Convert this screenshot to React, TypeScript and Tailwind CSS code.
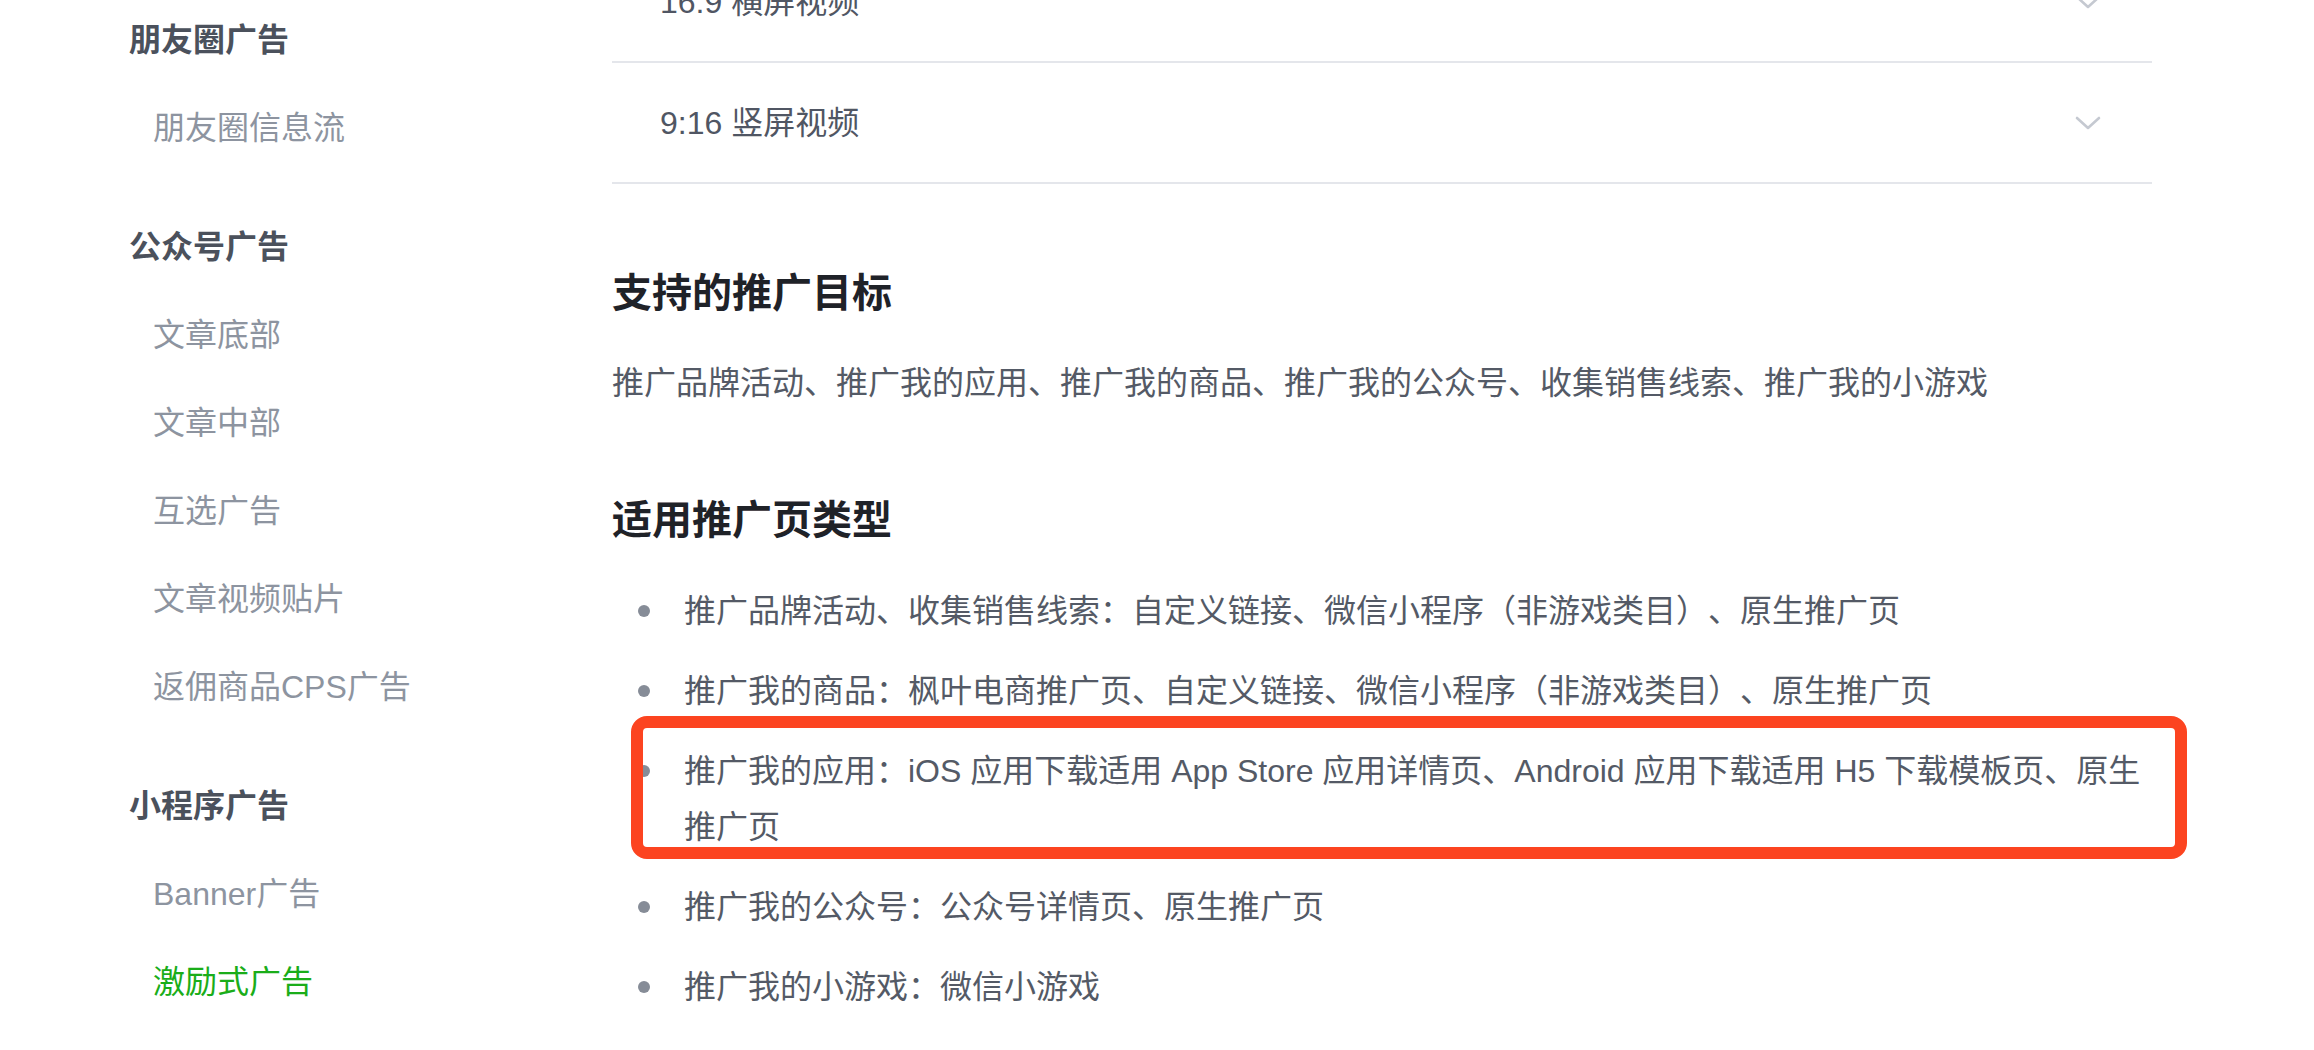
import React from 'react';

type NavGroup = { title: string; items: string[]; active?: string };

const NAV: NavGroup[] = [
  { title: '朋友圈广告', items: ['朋友圈信息流'] },
  { title: '公众号广告', items: ['文章底部', '文章中部', '互选广告', '文章视频贴片', '返佣商品CPS广告'] },
  { title: '小程序广告', items: ['Banner广告', '激励式广告'], active: '激励式广告' },
];

const FORMATS = ['16:9 横屏视频', '9:16 竖屏视频'];

const PAGE_TYPES = [
  '推广品牌活动、收集销售线索：自定义链接、微信小程序（非游戏类目）、原生推广页',
  '推广我的商品：枫叶电商推广页、自定义链接、微信小程序（非游戏类目）、原生推广页',
  null, // app row, rendered with the highlight box
  '推广我的公众号：公众号详情页、原生推广页',
  '推广我的小游戏：微信小游戏',
];

const Chevron = () => (
  <svg width="26" height="16" viewBox="0 0 26 16" fill="none">
    <polyline points="2,3 13,13 24,3" stroke="#c5c9d1" strokeWidth="2.6" strokeLinecap="round" strokeLinejoin="round" />
  </svg>
);

const Sidebar = () => (
  <aside className="w-[612px] shrink-0 pl-[129px] -mt-[4px] flex flex-col gap-[31px]">
    {NAV.map((g) => (
      <div key={g.title} className="flex flex-col">
        <div className="h-[88px] leading-[88px] text-[32px] font-semibold text-[#4b515c]">{g.title}</div>
        {g.items.map((it) => (
          <div
            key={it}
            className={`h-[88px] leading-[88px] pl-[24px] text-[32px] ${it === g.active ? 'text-[#1aad19]' : 'text-[#8d94a0]'}`}
          >
            {it}
          </div>
        ))}
      </div>
    ))}
  </aside>
);

const Bullet = () => (
  <div className="w-[72px] h-[56px] shrink-0 flex items-center">
    <span className="ml-[26px] w-[12px] h-[12px] rounded-full bg-[#868c97]" />
  </div>
);

export default function App() {
  return (
    <div className="w-[2314px] h-[1050px] overflow-hidden bg-white flex [text-spacing-trim:space-all] font-['Liberation_Sans','Noto_Sans_CJK_SC',sans-serif]">
      <Sidebar />

      <main className="w-[1540px] shrink-0 -mt-[58px] flex flex-col">
        {FORMATS.map((f) => (
          <div key={f} className="h-[121px] border-b-2 border-[#e4e6eb] flex items-center justify-between pl-[48px] pr-[51px]">
            <span className="text-[32px] text-[#505663]">{f}</span>
            <Chevron />
          </div>
        ))}

        <h2 className="mt-[81px] text-[40px] leading-[56px] font-semibold text-[#1f2228]">支持的推广目标</h2>
        <p className="mt-[34px] text-[32px] leading-[56px] text-[#545a66]">
          推广品牌活动、推广我的应用、推广我的商品、推广我的公众号、收集销售线索、推广我的小游戏
        </p>

        <h2 className="mt-[81px] text-[40px] leading-[56px] font-semibold text-[#1f2228]">适用推广页类型</h2>
        <ul className="mt-[35px] flex flex-col gap-[24px]">
          {PAGE_TYPES.map((t, i) =>
            t ? (
              <li key={i} className="flex text-[32px] leading-[56px] text-[#545a66]">
                <Bullet />
                <span className="whitespace-nowrap">{t}</span>
              </li>
            ) : (
              <li key={i} className="relative flex text-[32px] leading-[56px] text-[#545a66]">
                <Bullet />
                <span>
                  推广我的应用：iOS 应用下载适用 App Store 应用详情页、Android 应用下载适用 H5 下载模板页、原生
                  <br />
                  推广页
                </span>
                {/* annotation box drawn over the row */}
                <div className="absolute top-[-27px] bottom-[-4px] left-[19px] right-[-35px] border-[12px] border-[#fc4420] rounded-[16px] pointer-events-none" />
              </li>
            )
          )}
        </ul>
      </main>
    </div>
  );
}
